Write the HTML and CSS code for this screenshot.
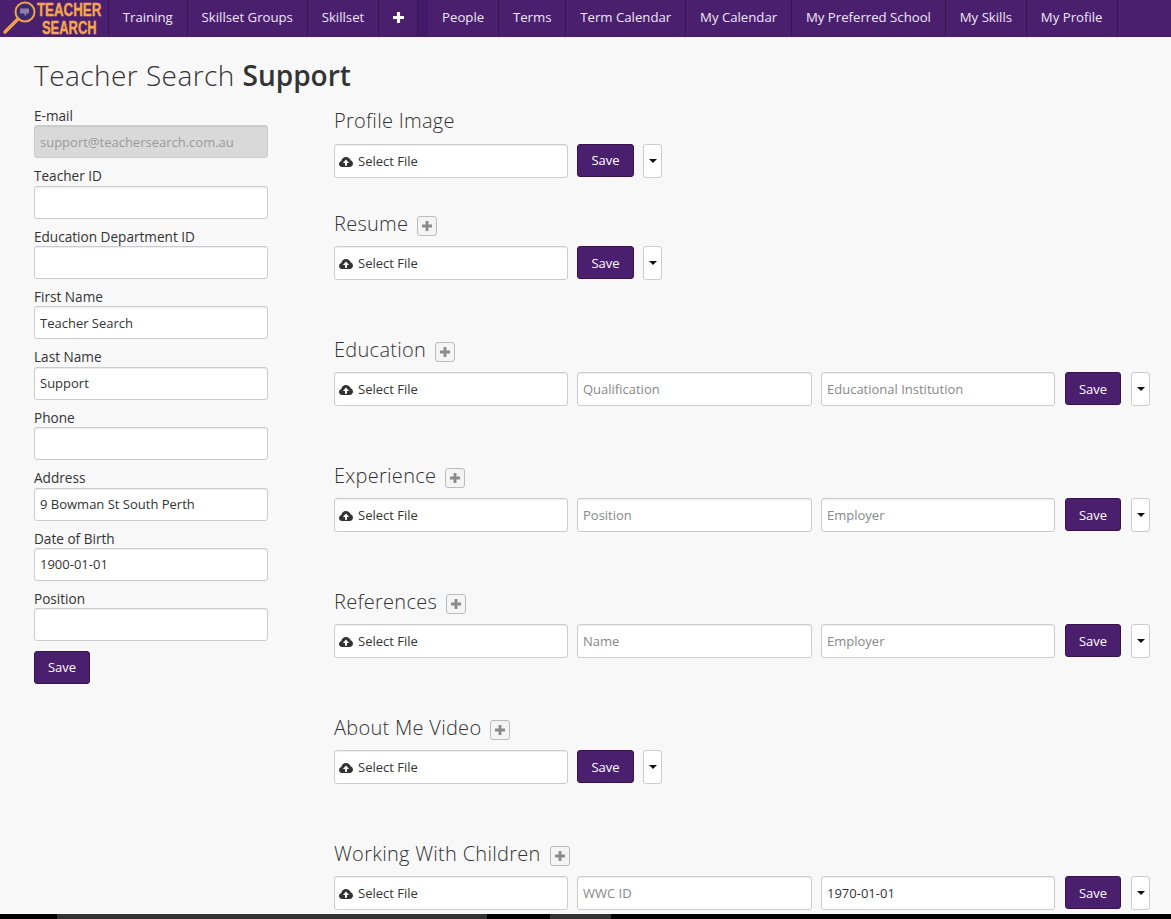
FILE: index.html
```html
<!DOCTYPE html>
<html lang="en">
<head>
<meta charset="utf-8">
<title>Teacher Search Support</title>
<link rel="stylesheet" href="styles.css">
</head>
<body>
<svg class="defs" width="0" height="0" aria-hidden="true">
  <symbol id="cloud" viewBox="0 0 14 11">
    <path fill="#333" fill-rule="evenodd" d="M3.2 11C1.4 11 0 9.7 0 8c0-1.4 1-2.6 2.3-2.9C2.5 2.8 4.500 1 7 1c2.200 0 4 1.300 4.600 3.200C13 4.500 14 5.900 14 7.500 14 9.500 12.500 11 10.600 11ZM7 3.600 3.900 7H6v2.800h2V7h2.100Z"/>
  </symbol>
  <symbol id="plus" viewBox="0 0 12 12">
    <path fill="currentColor" d="M4.300 0h3.400v4.300H12v3.400H7.700V12H4.300V7.700H0V4.300h4.300Z"/>
  </symbol>
</svg>

<nav class="topbar">
  <a class="brand" href="#">
    <svg class="brand-mark" width="40" height="37" viewBox="0 0 40 37" aria-hidden="true">
      <circle cx="25" cy="12" r="9.500" fill="#3d2a6e" stroke="#f0a04b" stroke-width="2"/>
      <path d="M20 8.500h9v5h-2.500l-1 3-1.500-3H20Z" fill="#8d7fa8"/>
      <path d="M18 19 5 32" stroke="#f0a04b" stroke-width="3.500" stroke-linecap="round"/>
    </svg>
    <span class="logo-line">TEACHER</span>
    <span class="logo-line logo-line-2">SEARCH</span>
  </a>
  <ul class="menu">
    <li><a href="#">Training</a></li>
    <li><a href="#">Skillset Groups</a></li>
    <li><a href="#">Skillset</a></li>
    <li><a class="menu-plus" href="#" aria-label="More"><svg width="11" height="11"><use href="#plus"/></svg></a></li>
  </ul>
  <div class="menu-gap"></div>
  <ul class="menu">
    <li><a href="#">People</a></li>
    <li><a href="#">Terms</a></li>
    <li><a href="#">Term Calendar</a></li>
    <li><a href="#">My Calendar</a></li>
    <li><a href="#">My Preferred School</a></li>
    <li><a href="#">My Skills</a></li>
    <li><a href="#">My Profile</a></li>
  </ul>
</nav>

<main class="page">
  <h1 class="title">Teacher Search <strong>Support</strong></h1>
  <div class="columns">
    <form class="details">
      <div class="field"><label>E-mail</label><input class="input" disabled value="support@teachersearch.com.au"></div>
      <div class="field"><label>Teacher ID</label><input class="input"></div>
      <div class="field"><label>Education Department ID</label><input class="input"></div>
      <div class="field"><label>First Name</label><input class="input" value="Teacher Search"></div>
      <div class="field"><label>Last Name</label><input class="input" value="Support"></div>
      <div class="field"><label>Phone</label><input class="input"></div>
      <div class="field"><label>Address</label><input class="input" value="9 Bowman St South Perth"></div>
      <div class="field"><label>Date of Birth</label><input class="input" value="1900-01-01"></div>
      <div class="field"><label>Position</label><input class="input"></div>
      <button class="save" type="button">Save</button>
    </form>

    <div class="documents">
      <section class="doc doc-first">
        <h2>Profile Image</h2>
        <div class="doc-row">
          <div class="input file"><svg width="14" height="11"><use href="#cloud"/></svg>Select File</div>
          <button class="save" type="button">Save</button>
          <button class="caret-btn" type="button" aria-label="Options"><i></i></button>
        </div>
      </section>

      <section class="doc">
        <h2>Resume <button class="add" type="button" aria-label="Add"><svg width="10" height="10"><use href="#plus"/></svg></button></h2>
        <div class="doc-row">
          <div class="input file"><svg width="14" height="11"><use href="#cloud"/></svg>Select File</div>
          <button class="save" type="button">Save</button>
          <button class="caret-btn" type="button" aria-label="Options"><i></i></button>
        </div>
      </section>

      <section class="doc">
        <h2>Education <button class="add" type="button" aria-label="Add"><svg width="10" height="10"><use href="#plus"/></svg></button></h2>
        <div class="doc-row">
          <div class="input file"><svg width="14" height="11"><use href="#cloud"/></svg>Select File</div>
          <input class="input" placeholder="Qualification">
          <input class="input third" placeholder="Educational Institution">
          <button class="save" type="button">Save</button>
          <button class="caret-btn" type="button" aria-label="Options"><i></i></button>
        </div>
      </section>

      <section class="doc">
        <h2>Experience <button class="add" type="button" aria-label="Add"><svg width="10" height="10"><use href="#plus"/></svg></button></h2>
        <div class="doc-row">
          <div class="input file"><svg width="14" height="11"><use href="#cloud"/></svg>Select File</div>
          <input class="input" placeholder="Position">
          <input class="input third" placeholder="Employer">
          <button class="save" type="button">Save</button>
          <button class="caret-btn" type="button" aria-label="Options"><i></i></button>
        </div>
      </section>

      <section class="doc">
        <h2>References <button class="add" type="button" aria-label="Add"><svg width="10" height="10"><use href="#plus"/></svg></button></h2>
        <div class="doc-row">
          <div class="input file"><svg width="14" height="11"><use href="#cloud"/></svg>Select File</div>
          <input class="input" placeholder="Name">
          <input class="input third" placeholder="Employer">
          <button class="save" type="button">Save</button>
          <button class="caret-btn" type="button" aria-label="Options"><i></i></button>
        </div>
      </section>

      <section class="doc">
        <h2>About Me Video <button class="add" type="button" aria-label="Add"><svg width="10" height="10"><use href="#plus"/></svg></button></h2>
        <div class="doc-row">
          <div class="input file"><svg width="14" height="11"><use href="#cloud"/></svg>Select File</div>
          <button class="save" type="button">Save</button>
          <button class="caret-btn" type="button" aria-label="Options"><i></i></button>
        </div>
      </section>

      <section class="doc doc-last">
        <h2>Working With Children <button class="add" type="button" aria-label="Add"><svg width="10" height="10"><use href="#plus"/></svg></button></h2>
        <div class="doc-row">
          <div class="input file"><svg width="14" height="11"><use href="#cloud"/></svg>Select File</div>
          <input class="input" placeholder="WWC ID">
          <input class="input third" value="1970-01-01">
          <button class="save" type="button">Save</button>
          <button class="caret-btn" type="button" aria-label="Options"><i></i></button>
        </div>
      </section>
    </div>
  </div>
</main>

<div class="bottom-strip"><span class="seg-a"></span><span class="seg-b"></span></div>
</body>
</html>
```

FILE: styles.css
```css
* { box-sizing: border-box; }
html, body { height: 100%; overflow: hidden; }
body {
  margin: 0;
  background: #f8f8f8;
  color: #333;
  font-family: "Open Sans", "Noto Sans", sans-serif;
  font-size: 13px;
}
.defs { position: absolute; }

.topbar {
  display: flex;
  height: 37px;
  background: #4a206e;
}
.brand {
  position: relative;
  display: block;
  flex: none;
  width: 109px;
  height: 37px;
  padding: 1px 0 0 37px;
  border-right: 1px solid #371650;
  text-decoration: none;
}
.brand-mark { position: absolute; left: 0; top: 0; }
.logo-line {
  display: block;
  height: 17px;
  width: max-content;
  color: #f4a650;
  font: 700 19px/17px "Liberation Sans", sans-serif;
  transform: scaleX(.7);
  transform-origin: left center;
  -webkit-text-stroke: .4px #f4a650;
}
.logo-line-2 { margin: 1px 0 0 5px; transform: scaleX(.68); }

.menu { display: flex; flex: none; margin: 0; padding: 0; list-style: none; }
.menu li { border-right: 1px solid #371650; }
.menu a {
  display: flex;
  align-items: center;
  height: 34px;
  padding: 0 14px 0 13.8px;
  color: #eee8f4;
  font-size: 13.2px;
  text-decoration: none;
}
.menu .menu-plus { width: 38px; }
.menu-plus svg { flex: none; color: #fff; }
.menu-gap { flex: none; width: 10px; background: #43196a; }

.page { padding: 0 21px 0 34px; }
.title {
  margin: 0;
  padding-top: 20px;
  height: 79px;
  color: #333;
  font-size: 28px;
  line-height: 36px;
  font-weight: 300;
  letter-spacing: .45px;
}
.title strong { font-weight: 600; letter-spacing: 0; }

.columns { display: flex; }

.details { width: 234px; margin: -9.075px 66px 0 0; flex: none; }
.field { height: 60.375px; }
.field label {
  display: block;
  height: 18.375px;
  line-height: 18.4px;
  font-size: 13.6px;
  color: #333;
}

.input {
  display: block;
  width: 100%;
  height: 33px;
  padding: 0 5px;
  border: 1px solid #ccc;
  border-radius: 3px;
  background: #fff;
  color: #333;
  font: 13px "Open Sans", "Noto Sans", sans-serif;
  box-shadow: inset 0 1px 1px rgba(0,0,0,.075);
}
.input::placeholder { color: #888; opacity: 1; }
.input:disabled { background: #d9d9d9; color: #999; }

.save {
  height: 33px;
  width: 56px;
  padding: 0;
  flex: none;
  border: 1px solid #38124f;
  border-radius: 3px;
  background: #4a206e;
  color: #fff;
  font: 13px "Open Sans", "Noto Sans", sans-serif;
}
.details .save { margin-top: 1px; padding-bottom: 1px; }

.documents { flex: 1; min-width: 0; margin-top: -9px; }
.doc { height: 126px; }
.doc-first { height: 102px; }
.doc-last { height: auto; }
.doc h2 {
  display: flex;
  align-items: center;
  gap: 9px;
  height: 28px;
  margin: 0 0 9px;
  padding-top: 2px;
  font-size: 20px;
  font-weight: 300;
  color: #333;
  line-height: 28px;
  letter-spacing: .28px;
}
.doc-first h2 { padding-top: 0; }
.doc-first .save { padding-bottom: 1px; }
.add {
  display: flex;
  align-items: center;
  justify-content: center;
  width: 20px;
  height: 20px;
  padding: 0;
  margin-top: 3px;
  border: 1px solid #bbb;
  border-radius: 3px;
  background: #f4f4f4;
  color: #8a8a8a;
}
.doc-row { display: flex; gap: 9px; align-items: flex-start; }
.doc-row .input { flex: 0 0 235px; min-width: 0; height: 34px; }
.doc-row .file {
  display: flex;
  align-items: center;
  gap: 5px;
  flex: 0 0 234px;
  padding-left: 4px;
}
.doc-row .third { flex: 0 0 234px; }
.third + .save { margin-left: 1px; }
.third + .save + .caret-btn { margin-left: 1px; }
.file + .save { width: 57px; }
.caret-btn {
  display: flex;
  align-items: center;
  justify-content: center;
  flex: none;
  width: 19px;
  height: 34px;
  padding: 0;
  border: 1px solid #ccc;
  border-radius: 3px;
  background: #fff;
}
.caret-btn i {
  width: 0;
  height: 0;
  border-left: 4px solid transparent;
  border-right: 4px solid transparent;
  border-top: 4px solid #111;
}

.bottom-strip {
  position: fixed;
  left: 0;
  right: 0;
  bottom: 0;
  height: 5px;
  background: #000;
}
.bottom-strip span { position: absolute; top: 0; bottom: 0; background: #333; }
.seg-a { left: 57px; width: 430px; }
.seg-b { left: 550px; width: 61px; }
```
